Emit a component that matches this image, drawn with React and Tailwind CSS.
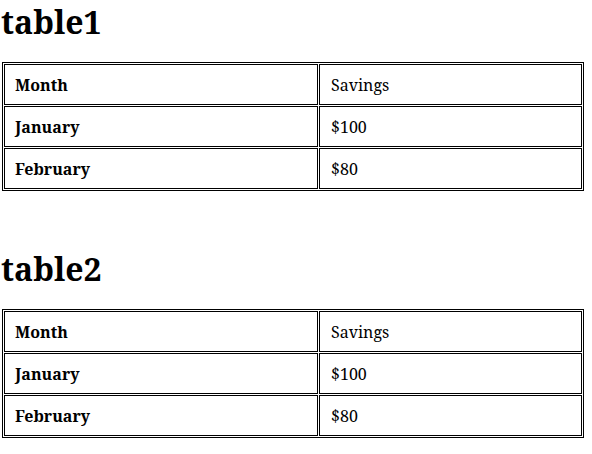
import React from "react";

const rows = [
  ["Month", "Savings"],
  ["January", "$100"],
  ["February", "$80"],
];

const SavingsTable = ({ title }) => (
  <section>
    <h1 className="text-[32px] font-bold leading-[40px] pl-[1px]">{title}</h1>
    <table className="mt-[20px] ml-[2px] w-[582px] border border-black border-separate border-spacing-[1px]">
      <tbody>
        {rows.map(([month, amount]) => (
          <tr key={month}>
            <td className="w-[314px] h-[41px] border border-black px-[10px] font-bold">
              {month}
            </td>
            <td className="h-[41px] border border-black px-[11px]">{amount}</td>
          </tr>
        ))}
      </tbody>
    </table>
  </section>
);

export default function App() {
  return (
    <div className="font-['Noto_Serif','DejaVu_Serif',serif] text-black text-base bg-white pt-[2px]">
      <SavingsTable title="table1" />
      <div className="h-[58px]" />
      <SavingsTable title="table2" />
    </div>
  );
}
